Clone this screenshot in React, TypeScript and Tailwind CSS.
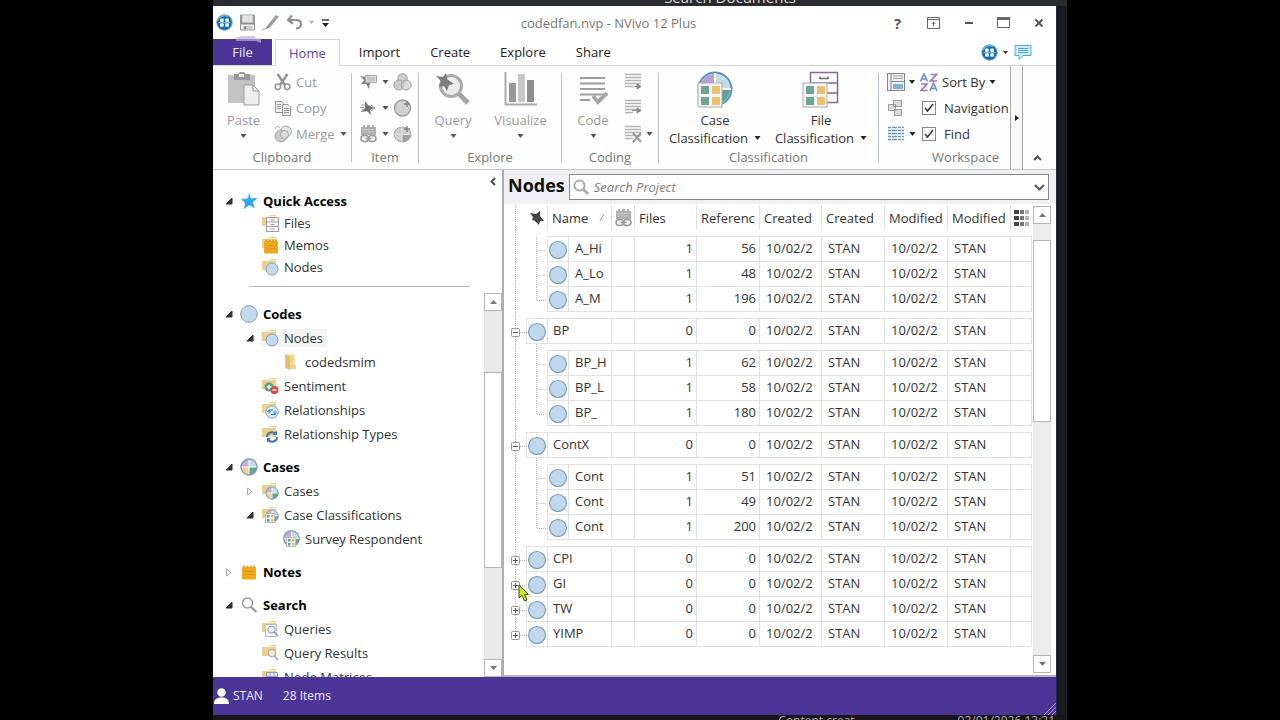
import type { ReactNode } from "react";

const Caret = ({ dark = true }: { dark?: boolean }) => (
  <svg width="7" height="4" viewBox="0 0 7 4" className="shrink-0">
    <path d="M.5 0h6L3.500 4z" fill={dark ? "#222" : "#555"} />
  </svg>
);

const Logo = () => (
  <svg width="17" height="17" viewBox="0 0 17 17" className="shrink-0">
    <circle cx="8.500" cy="8.500" r="7.700" fill="#1b6ba3" stroke="#6a9dc2" />
    <path d="M2 6a7 7 0 0 1 10-3.500" stroke="#6db4df" strokeWidth="1.500" fill="none" />
    <g fill="#e4f5ff">
      <rect x="4" y="4.500" width="3.800" height="3.500" rx="1" />
      <rect x="9.200" y="4.500" width="3.800" height="3.500" rx="1" />
      <rect x="4" y="9.300" width="3.800" height="3.500" rx="1" />
      <rect x="9.200" y="9.300" width="3.800" height="3.500" rx="1" />
    </g>
    <path d="M2.500 8.600h12" stroke="#9fd2ee" strokeWidth="0.800" />
  </svg>
);

const SaveIcon = () => (
  <svg width="17" height="17" viewBox="0 0 17 17">
    <path d="M1.500 1h14v15h-14z" fill="#ededed" stroke="#999" />
    <rect x="1" y="1" width="2.500" height="8" fill="#999" />
    <rect x="13.500" y="1" width="2.500" height="8" fill="#999" />
    <rect x="3.500" y="1.500" width="10" height="7" fill="#e2e2e2" />
    <rect x="1" y="8.500" width="15" height="2" fill="#8f8f8f" />
    <rect x="4" y="12" width="9" height="3.500" fill="#c9c9c9" />
    <rect x="5" y="12.500" width="2" height="3" fill="#888" />
  </svg>
);

const PenIcon = () => (
  <svg width="18" height="17" viewBox="0 0 18 17">
    <path d="M5 12l9-11 3 1.500L8 13.500z" fill="#9b9b9b" />
    <path d="M5 12l-1.500 3L8 13.500z" fill="#777" />
    <path d="M0 15.500l5-1" stroke="#aaa" />
  </svg>
);

const UndoIcon = () => (
  <svg width="17" height="17" viewBox="0 0 17 17" fill="none" stroke="#8d8d8d" strokeWidth="2.200">
    <path d="M6 1.500L2 6l5 3.500M2.500 6h7.500c3 0 5 1.500 5 4s-2 4.500-5 4.500" />
  </svg>
);

const PasteIcon = () => (
  <svg width="34" height="36" viewBox="0 0 34 36">
    <rect x="1" y="4" width="27" height="28" fill="#c3c3c3" />
    <path d="M7 3h4l2-2h4l2 2h4v6H7z" fill="#999" />
    <rect x="12" y="3" width="5" height="3" fill="#e8e8e8" />
    <path d="M17 14h9l6 6v14H17z" fill="#eee" stroke="#9e9e9e" />
    <path d="M26 14v6h6" fill="none" stroke="#9e9e9e" />
  </svg>
);

const CutIcon = () => (
  <svg width="17" height="18" viewBox="0 0 17 18" fill="none" stroke="#949494">
    <path d="M3.500 1l7.500 11M13.500 1L6 12" strokeWidth="2.400" />
    <circle cx="3.800" cy="13.800" r="2.700" strokeWidth="1.500" />
    <circle cx="13.200" cy="13.800" r="2.700" strokeWidth="1.500" />
  </svg>
);

const CopyIcon = () => (
  <svg width="18" height="17" viewBox="0 0 18 17" stroke="#949494">
    <path d="M1.500 1.500h6l2 2v9h-8z" fill="#eee" />
    <path d="M3 4.500h4M3 6.500h4M3 8.500h4" />
    <path d="M8.500 4.500h5.500l2.500 2.500v8.500h-8z" fill="#eee" />
    <path d="M10 8.500h5M10 10.500h5M10 12.500h5" />
  </svg>
);

const MergeIcon = () => (
  <svg width="19" height="18" viewBox="0 0 19 18" stroke="#a6a6a6">
    <circle cx="12" cy="6.500" r="5.500" fill="#e3e3e3" />
    <circle cx="7" cy="11" r="6" fill="#c9c9c9" />
    <circle cx="10.500" cy="9.500" r="4" fill="#ddd" />
    <path d="M1 4c1-3 4-3 5-1" fill="none" />
  </svg>
);

const ItemStarNote = () => (
  <svg width="18" height="16" viewBox="0 0 18 16">
    <path d="M0 2l6 1 2-3 1 4 5 3-4 2-1 6-3-5-5 0 3-4z" fill="#858585" />
    <rect x="5.500" y="1.500" width="11" height="7" fill="#ddd" stroke="#a5a5a5" />
    <path d="M7 4h8M7 6h8" stroke="#aaa" />
  </svg>
);

const ItemStar = () => (
  <svg width="18" height="16" viewBox="0 0 18 16">
    <path d="M5 1l3 4 6 3-4 2 1 5-4-4-6 1 4-4z" fill="#6f7078" />
    <path d="M1 5h4M0 7.500h4M1 10h3M11 5l4 3-4 3" stroke="#999" fill="none" />
  </svg>
);

const LinkBlocks = () => (
  <svg width="17" height="18" viewBox="0 0 17 18">
    <path d="M1 2h2V0h2v2h2V0h3v2h2V0h2v2h2v8H1z" fill="#adadad" />
    <path d="M2.500 4.500h12M2.500 7h12" stroke="#d4d4d4" strokeDasharray="2 1" />
    <rect x="1" y="10.500" width="7.500" height="6" rx="3" fill="#f0f0f0" stroke="#999" strokeWidth="1.500" />
    <rect x="8.500" y="10.500" width="7.500" height="6" rx="3" fill="#f0f0f0" stroke="#999" strokeWidth="1.500" />
    <path d="M5.500 13.500h6" stroke="#999" strokeWidth="1.500" />
  </svg>
);

const VennIcon = () => (
  <svg width="19" height="18" viewBox="0 0 19 18" stroke="#a2a2a2" fill="#cdcdcd">
    <circle cx="9.500" cy="5.500" r="4.800" />
    <circle cx="5.800" cy="12" r="5" />
    <circle cx="13.200" cy="12" r="5" fillOpacity="0.700" />
  </svg>
);

const CirclePlus = () => (
  <svg width="19" height="18" viewBox="0 0 19 18">
    <circle cx="9.500" cy="9" r="8" fill="#d0d0d0" stroke="#a0a0a0" strokeWidth="1.500" />
    <path d="M14 2v6M11 5h6" stroke="#858585" strokeWidth="1.500" />
  </svg>
);

const PieSmall = () => (
  <svg width="19" height="18" viewBox="0 0 19 18">
    <ellipse cx="9.500" cy="9.500" rx="8.500" ry="7.500" fill="#cfcfcf" stroke="#a5a5a5" />
    <path d="M9 9.500h8.500a8.500 7.500 0 0 1-8.500 7.500z" fill="#a0a0a0" />
    <path d="M9 2v15M1.500 9.500h16" stroke="#e6e6e6" />
    <path d="M14 1v6M11 4h6" stroke="#858585" strokeWidth="1.500" />
  </svg>
);

const QueryIcon = () => (
  <svg width="34" height="36" viewBox="0 0 34 36">
    <circle cx="15" cy="15" r="10.500" fill="#ececec" stroke="#aaa" strokeWidth="3" />
    <path d="M23 23l9 9" stroke="#a4a4a4" strokeWidth="5" />
    <path d="M0 5l7 1 3-4 1 6 7 5-5 1-2 6-3-5-5 1 2-6z" fill="#7c7c7c" />
  </svg>
);

const VisualizeIcon = () => (
  <svg width="34" height="36" viewBox="0 0 34 36">
    <path d="M1.500 1v32.500H33" fill="none" stroke="#aaa" strokeWidth="2" />
    <rect x="5" y="12" width="7" height="19" fill="#999" />
    <rect x="14" y="3" width="7" height="28" fill="#c8c8c8" />
    <rect x="23" y="9" width="7" height="22" fill="#8e8e8e" />
  </svg>
);

const CodeIcon = () => (
  <svg width="30" height="36" viewBox="0 0 30 36" stroke="#9e9e9e" fill="none">
    <path d="M2 7h25M2 12.500h25M2 18h25M2 23.500h25M2 29h10" strokeWidth="2" />
    <path d="M15 25l5 6 9-9" strokeWidth="4" stroke="#a6a6a6" />
  </svg>
);

const CodingLines = ({ kind }: { kind: "arrow" | "in" | "x" }) => (
  <svg width="18" height="18" viewBox="0 0 18 18" stroke="#b3b3b3" fill="none">
    <path d="M1 1.500h16M1 4.500h16M1 7.500h16M1 10.500h16M1 13.500h8" strokeWidth="1.700" />
    {kind === "arrow" && <path d="M10 13.500h3v-2.500l4 2.500-4 2.500v-2.500" fill="#888" stroke="#888" />}
    {kind === "in" && <path d="M8 11.500h5v-2.500l4 2.500-4 2.500v-2.500" fill="#888" stroke="#888" />}
    {kind === "x" && <path d="M9 8l8 9M17 8l-8 9" stroke="#999" strokeWidth="2" />}
  </svg>
);

const Squares = () => (
  <g>
    <rect x="1" y="12" width="24" height="24" fill="#f6f6f4" stroke="#aaa" />
    <rect x="4" y="15" width="8" height="8" fill="#6da594" />
    <rect x="15" y="15" width="8" height="8" fill="#ecc06c" />
    <rect x="4" y="26" width="8" height="8" fill="#6da594" />
    <rect x="15" y="26" width="8" height="8" fill="#ecc06c" />
  </g>
);

const CaseClassIcon = () => (
  <svg width="36" height="38" viewBox="0 0 36 38">
    <circle cx="18" cy="18" r="16.500" fill="#c5dbe9" stroke="#5b93bd" strokeWidth="2" />
    <path d="M17 17V3A15 15 0 0 0 3 17z" fill="#b9a0d2" />
    <path d="M19 19h14a15 15 0 0 1-14 14z" fill="#5e9f93" />
    <path d="M18 2v32M2 18h32" stroke="#fff" strokeWidth="2" />
    <Squares />
  </svg>
);

const FileClassIcon = () => (
  <svg width="38" height="38" viewBox="0 0 38 38">
    <path d="M8.500 1.500h27v30h-27z" fill="#fff" stroke="#86699a" strokeWidth="1.500" />
    <path d="M8 12h28M8 22h28" stroke="#86699a" strokeWidth="1.500" />
    <path d="M18 5.500v2h8v-2" fill="none" stroke="#666" strokeWidth="1.500" />
    <Squares />
  </svg>
);

const Folder = ({ children }: { children?: ReactNode }) => (
  <svg width="18" height="18" viewBox="0 0 18 18" className="block">
    <path d="M1 3h6l2-2h6v11H1z" fill="#ecd08d" />
    <path d="M8 2.500h6.500" stroke="#fff3d0" />
    {children}
  </svg>
);

const Pie = ({ x, y, r }: { x: number; y: number; r: number }) => (
  <g transform={`translate(${x} ${y}) scale(${r})`}>
    <circle r="1" fill="#c9dcea" />
    <path d="M0 0V-1A1 1 0 0 0-1 0z" fill="#c3aed8" />
    <path d="M0 0H-1A1 1 0 0 0 0 1z" fill="#ecd28c" />
    <path d="M0 0H1A1 1 0 0 1 0 1z" fill="#68a694" />
    <path d="M0-1V1M-1 0H1" stroke="#fff" strokeWidth="0.120" />
    <circle r="0.940" fill="none" stroke="#7c9fbe" strokeWidth="0.150" />
  </g>
);

const Pad = () => (
  <g>
    <rect x="3" y="5" width="14" height="12.500" rx="1" fill="#f2a81d" />
    <path d="M5 5.500v-2M8.500 5.500v-2M12 5.500v-2M15 5.500v-2" stroke="#e09312" strokeWidth="1.500" />
    <path d="M5.500 9.500h9M5.500 12.500h9" stroke="#d98f10" strokeDasharray="3 1" />
  </g>
);

const MiniGrid = () => (
  <g>
    <rect x="4.500" y="7.500" width="9" height="9" fill="#f5f5ef" stroke="#bbb" />
    <path d="M6 9h2.500v2.500H6zM6 13h2.500v2.500H6z" fill="#5d9dab" />
    <path d="M10 9h2.500v2.500H10zM10 13h2.500v2.500H10z" fill="#e6c069" />
  </g>
);

const treeIcons: Record<string, ReactNode> = {
  star: (
    <svg width="18" height="18" viewBox="0 0 18 18">
      <path d="M9 1l2 5.500 6.500-.5-5 4.500 2.500 6L9.500 13 4 17l1-6-4-4 6-.5z" fill="#2fa4e8" />
      <path d="M1.500 7l6-.5L9 2" stroke="#9bdcff" fill="none" />
    </svg>
  ),
  files: (
    <Folder>
      <rect x="5.500" y="3.500" width="12" height="14" fill="#fff" stroke="#a394b5" />
      <path d="M5.500 8h12M5.500 12.500h12" stroke="#a394b5" />
      <path d="M9.500 6h4M9.500 10.500h4M9.500 15h4" stroke="#999" />
    </Folder>
  ),
  memos: <Folder><Pad /></Folder>,
  nodes: <Folder><circle cx="11" cy="11" r="6" fill="#c2d9ed" stroke="#819fba" /></Folder>,
  codes: (
    <svg width="18" height="18" viewBox="0 0 18 18">
      <circle cx="9" cy="9" r="8.300" fill="#c2d9ef" stroke="#819fba" />
    </svg>
  ),
  folder: (
    <svg width="18" height="18" viewBox="0 0 18 18">
      <path d="M7 1h6v15H7z" fill="#f6e3b3" />
      <path d="M3 1l5 2v14l-5-2z" fill="#e6bf6b" />
      <path d="M8 3h3v8l3 1v4H8z" fill="#efd18b" />
    </svg>
  ),
  sentiment: (
    <Folder>
      <circle cx="8" cy="10" r="4.500" fill="#4f9c87" />
      <circle cx="13.500" cy="13" r="4" fill="#d8483f" />
      <path d="M8 7.500v5M5.500 10h5M11.500 13h4" stroke="#fff" strokeWidth="1.500" />
    </Folder>
  ),
  relationships: (
    <Folder>
      <circle cx="11" cy="11" r="6.200" fill="#d5e8f5" stroke="#7fa7c8" />
      <path d="M8 12.500V9h4M14 9.500V13.500h-4M6.500 11l1.500-2 1.500 2M12.500 11.500l1.500 2 1.500-2" stroke="#387cb0" fill="none" />
    </Folder>
  ),
  reltypes: (
    <Folder>
      <path d="M6 12c0-5 6-6 9-3M16 12c0 5-6 6-9 3" stroke="#3c77b5" strokeWidth="2" fill="none" />
      <path d="M16 5.500V10h-4.500zM6 17.500V13h4z" fill="#3c77b5" />
    </Folder>
  ),
  pie: <svg width="18" height="18" viewBox="0 0 18 18"><Pie x={9} y={9} r={8.500} /></svg>,
  cases: <Folder><Pie x={11} y={11} r={6.500} /></Folder>,
  caseclass: <Folder><Pie x={11} y={10} r={6.500} /><MiniGrid /></Folder>,
  survey: <svg width="18" height="18" viewBox="0 0 18 18"><Pie x={9.500} y={8.500} r={8.200} /><MiniGrid /></svg>,
  notes: <svg width="18" height="18" viewBox="1 1 18 18"><Pad /></svg>,
  search: (
    <svg width="18" height="18" viewBox="0 0 18 18" fill="none" stroke="#999">
      <circle cx="7.500" cy="7" r="5" strokeWidth="1.500" />
      <path d="M11 11l5.500 5" strokeWidth="2.200" />
    </svg>
  ),
  queries: (
    <Folder>
      <path d="M4.500 4.500h11v12h-11z" fill="#f2f4f8" stroke="#b4bcc9" />
      <circle cx="10.500" cy="9.500" r="3.500" fill="#e3eef7" stroke="#8b98a8" />
      <path d="M13 12l4 4" stroke="#8b98a8" strokeWidth="1.500" />
    </Folder>
  ),
  results: (
    <Folder>
      <circle cx="11" cy="9" r="3.800" fill="#f0ead4" stroke="#a3a398" />
      <path d="M13.500 12l3.500 4" stroke="#a3a398" strokeWidth="1.500" />
    </Folder>
  ),
  matrix: (
    <Folder>
      <path d="M5.500 4.500h11v12h-11zM9 4.500v12M13 4.500v12M5.500 8.500h11" fill="#e8edf3" stroke="#8fa0b3" />
    </Folder>
  ),
};

type Node = { label: string; icon: string; level: number; open?: boolean; selected?: boolean };

const TreeRow = ({ n, short }: { n: Node; short?: boolean }) => (
  <li className={n.level === 0 ? "pl-3" : n.level === 1 ? "pl-[33px]" : "pl-[54px]"}>
    <button className={`flex items-center whitespace-nowrap text-left ${short ? "h-[22px]" : "h-6"}`}>
      <span className="w-[15px] shrink-0">
        {n.open === true && <svg width="8" height="8" viewBox="0 0 8 8"><path d="M7 1v6H1z" fill="#333" stroke="#333" /></svg>}
        {n.open === false && <svg width="8" height="9" viewBox="0 0 8 9"><path d="M1.500 1v7l4.500-3.500z" fill="#fff" stroke="#aaa" /></svg>}
      </span>
      <span className={`flex items-center gap-[5px] pr-1 ${n.selected ? "bg-[#f4f4f5]" : ""}`}>
        {treeIcons[n.icon]}
        <span className={n.level === 0 ? "font-bold text-black" : "text-[#333]"}>{n.label}</span>
      </span>
    </button>
  </li>
);

const quick: Node[] = [
  { label: "Quick Access", icon: "star", level: 0, open: true },
  { label: "Files", icon: "files", level: 1 },
  { label: "Memos", icon: "memos", level: 1 },
  { label: "Nodes", icon: "nodes", level: 1 },
];

const sections: Node[][] = [
  [
    { label: "Codes", icon: "codes", level: 0, open: true },
    { label: "Nodes", icon: "nodes", level: 1, open: true, selected: true },
    { label: "codedsmim", icon: "folder", level: 2 },
    { label: "Sentiment", icon: "sentiment", level: 1 },
    { label: "Relationships", icon: "relationships", level: 1 },
    { label: "Relationship Types", icon: "reltypes", level: 1 },
  ],
  [
    { label: "Cases", icon: "pie", level: 0, open: true },
    { label: "Cases", icon: "cases", level: 1, open: false },
    { label: "Case Classifications", icon: "caseclass", level: 1, open: true },
    { label: "Survey Respondent", icon: "survey", level: 2 },
  ],
  [{ label: "Notes", icon: "notes", level: 0, open: false }],
  [
    { label: "Search", icon: "search", level: 0, open: true },
    { label: "Queries", icon: "queries", level: 1 },
    { label: "Query Results", icon: "results", level: 1 },
    { label: "Node Matrices", icon: "matrix", level: 1 },
  ],
];

const ScrollButton = ({ up }: { up?: boolean }) => (
  <button aria-label={up ? "Scroll up" : "Scroll down"} className="flex h-[18px] w-full shrink-0 items-center justify-center border border-[#b5b5b5] bg-white">
    <svg width="7" height="4" viewBox="0 0 7 4"><path d={up ? "M0 4h7L3.500 0z" : "M0 0h7L3.500 4z"} fill="#777" /></svg>
  </button>
);

const Group = ({ label, width, children }: { label: string; width: string; children: ReactNode }) => (
  <section className={`flex shrink-0 flex-col pt-[3px] ${width}`}>
    <div className="flex h-[78px]">{children}</div>
    <h2 className="text-center leading-5 text-[#777]">{label}</h2>
  </section>
);

const Separator = () => <div className="my-[7px] w-px shrink-0 bg-[#b9c0ca]" />;

const BigButton = ({ icon, label, width, dim = true }: { icon: ReactNode; label: string; width: string; dim?: boolean }) => (
  <button className={`flex shrink-0 flex-col items-center ${width} ${dim ? "text-[#999]" : "text-[#333]"}`}>
    <span className="flex h-10 items-center">{icon}</span>
    <span className="leading-[22px]">{label}</span>
    <span className="mt-[3px]"><Caret dark={!dim} /></span>
  </button>
);

const ClassButton = ({ icon, label }: { icon: ReactNode; label: string }) => (
  <button className="flex w-[106px] flex-col items-center text-[#333]">
    <span className="flex h-[42px] items-center">{icon}</span>
    <span className="leading-[18px]">{label}</span>
    <span className="flex items-center gap-1.5 leading-[18px]">Classification<Caret /></span>
  </button>
);

const IconPair = ({ a, b }: { a: ReactNode; b: ReactNode }) => (
  <div className="flex h-[26px] items-center justify-center gap-1 pl-px">
    <button aria-label="Item options" className="flex w-[29px] items-center justify-between">{a}<Caret dark={false} /></button>
    <button aria-label="Item action">{b}</button>
  </div>
);

type Row = { name: string; files: number; refs: number; child?: boolean; last?: boolean; open?: boolean; pointer?: boolean };

const groups: Row[][] = [
  [
    { name: "A_Hi", files: 1, refs: 56, child: true },
    { name: "A_Lo", files: 1, refs: 48, child: true },
    { name: "A_M", files: 1, refs: 196, child: true, last: true },
  ],
  [{ name: "BP", files: 0, refs: 0, open: true }],
  [
    { name: "BP_H", files: 1, refs: 62, child: true },
    { name: "BP_L", files: 1, refs: 58, child: true },
    { name: "BP_", files: 1, refs: 180, child: true, last: true },
  ],
  [{ name: "ContX", files: 0, refs: 0, open: true }],
  [
    { name: "Cont", files: 1, refs: 51, child: true },
    { name: "Cont", files: 1, refs: 49, child: true },
    { name: "Cont", files: 1, refs: 200, child: true, last: true },
  ],
  [
    { name: "CPI", files: 0, refs: 0 },
    { name: "GI", files: 0, refs: 0, pointer: true },
    { name: "TW", files: 0, refs: 0 },
    { name: "YIMP", files: 0, refs: 0, last: true },
  ],
];

const NodeDot = () => (
  <svg width="20" height="20" viewBox="0 0 20 20" className="mx-auto block">
    <circle cx="10" cy="11" r="8.500" fill="#c0d8ee" stroke="#7d9cb8" strokeWidth="1.200" />
  </svg>
);

const TreeLine = ({ row }: { row?: Row }) => {
  const parent = row && !row.child;
  return (
    <svg width="22" height="25" viewBox="0 0 22 25" className="block">
      <path d={parent && row.last ? "M11.500 0v14" : "M11.500 0v25"} stroke="#bbb" strokeDasharray="1 1" />
      {parent && (
        <g>
          <path d="M16 13.500h6" stroke="#bbb" strokeDasharray="1 1" />
          <rect x="7.500" y="9.500" width="8" height="8" rx="1" fill="#fff" stroke="#999" />
          <path d={row.open ? "M9 13.500h5" : "M9 13.500h5M11.500 11v5"} stroke="#555577" />
        </g>
      )}
    </svg>
  );
};

const box = "h-[25px] border-b border-r border-[#e2e2e2] p-0";
const cell = "h-[25px] border-b border-r border-[#e2e2e2] p-0 pb-0.5 whitespace-nowrap overflow-hidden";

const GapRow = ({ indent, above, first }: { indent: boolean; above: boolean; first?: boolean }) => (
  <tr>
    <td className="h-[7px] p-0">
      <svg width="22" height="7" viewBox="0 0 22 7" className="block"><path d="M11.500 0v7" stroke="#bbb" strokeDasharray="1 1" /></svg>
    </td>
    <td className={`h-[7px] p-0 ${indent ? "" : "border-b border-[#e2e2e2]"}`}>
      {indent && !above && !first && (
        <svg width="21" height="7" viewBox="0 0 21 7" className="block"><path d="M10.500 0v7" stroke="#bbb" strokeDasharray="1 1" /></svg>
      )}
    </td>
    <td colSpan={10} className="h-[7px] border-b border-[#e2e2e2] p-0" />
  </tr>
);

const DataRow = ({ r }: { r: Row }) => (
  <tr className="text-[#333]">
    <td className="relative h-[25px] p-0">
      <TreeLine row={r} />
      {r.pointer && (
        <svg width="12" height="18" viewBox="0 0 12 18" className="absolute left-[14px] top-3 z-10">
          <path d="M1 1v13l3-2.500 2.500 5.500 2.500-1-2.500-5.500h4z" fill="#c8ee1c" stroke="#3c4a10" />
        </svg>
      )}
    </td>
    {r.child ? (
      <>
        <td className="h-[25px] border-r border-[#e2e2e2] p-0">
          <svg width="20" height="25" viewBox="0 0 20 25" className="block">
            <path d={r.last ? "M10.500 0v13.500h10" : "M10.500 0v25M10.500 13.500h10"} fill="none" stroke="#bbb" strokeDasharray="1 1" />
          </svg>
        </td>
        <td className={box}><NodeDot /></td>
        <td className={`${cell} pl-1.5`}>{r.name}</td>
      </>
    ) : (
      <>
        <td className={`${box} border-l`}><NodeDot /></td>
        <td colSpan={2} className={`${cell} pl-[5px]`}>{r.name}</td>
      </>
    )}
    <td className={cell} />
    <td className={`${cell} pr-[3px] text-right`}>{r.files}</td>
    <td className={`${cell} pr-[3px] text-right`}>{r.refs}</td>
    <td className={`${cell} pl-1.5`}>10/02/2</td>
    <td className={`${cell} pl-1.5`}>STAN</td>
    <td className={`${cell} pl-1.5`}>10/02/2</td>
    <td className={`${cell} pl-1.5`}>STAN</td>
    <td className={cell} />
  </tr>
);

const head = "h-[25px] border-r border-[#e2e2e2] p-0 pl-1 text-left font-normal whitespace-nowrap overflow-hidden";

const NodesTable = () => (
  <table className="w-full table-fixed border-separate border-spacing-0">
    <colgroup>
      <col className="w-[22px]" />
      <col className="w-[22px]" />
      <col className="w-[21px]" />
      <col className="w-[43px]" />
      <col className="w-[23px]" />
      <col className="w-[62px]" />
      <col className="w-[63px]" />
      <col className="w-[62px]" />
      <col className="w-[63px]" />
      <col className="w-[63px]" />
      <col className="w-[63px]" />
      <col />
    </colgroup>
    <thead className="text-[#333]">
      <tr>
        <th className="h-[25px] p-0"><TreeLine /></th>
        <th className="h-[25px] border-r border-[#e2e2e2] p-0">
          <svg width="16" height="16" viewBox="0 0 16 16" className="mx-auto block"><path d="M1 3l6 1 4-3 0 5 4 5-4 0-1 4-4-4-3-1 1-3z" fill="#444" /></svg>
        </th>
        <th colSpan={2} className={head}>
          <span className="flex items-start justify-between pr-1.5">
            Name
            <svg width="6" height="9" viewBox="0 0 6 9" className="mt-1"><path d="M1 8l4-7" stroke="#999" /></svg>
          </span>
        </th>
        <th className="h-[25px] border-r border-[#e2e2e2] p-0"><span className="flex justify-center"><LinkBlocks /></span></th>
        <th className={head}>Files</th>
        <th className={head}>Referenc</th>
        <th className={head}>Created</th>
        <th className={head}>Created</th>
        <th className={head}>Modified</th>
        <th className={head}>Modified</th>
        <th className="h-[25px] p-0">
          <svg width="16" height="16" viewBox="0 0 16 16" className="mx-auto block">
            <path d="M0 0h5v4H0zM0 6h5v4H0zM0 12h5v4H0z" fill="#444" />
            <path d="M6 0h4v4H6zM6 6h4v4H6zM6 12h4v4H6z" fill="#777" />
            <path d="M11 0h4v4h-4zM11 6h4v4h-4zM11 12h4v4h-4z" fill="#b5b5b5" />
          </svg>
        </th>
      </tr>
    </thead>
    {groups.map((g, i) => (
      <tbody key={i}>
        <GapRow indent={!!g[0].child} above={i > 0 && !!groups[i - 1][0].child} first={i === 0} />
        {g.map((r, j) => <DataRow key={j} r={r} />)}
      </tbody>
    ))}
  </table>
);

const CheckRow = ({ label }: { label: string }) => (
  <label className="flex items-center gap-2">
    <span className="relative flex size-3.5 shrink-0">
      <input type="checkbox" defaultChecked className="size-3.5 appearance-none border border-[#888] bg-white" />
      <svg width="10" height="10" viewBox="0 0 10 10" className="pointer-events-none absolute left-0.5 top-0.5"><path d="M1 5l2.500 3L9 1" fill="none" stroke="#333" strokeWidth="1.500" /></svg>
    </span>
    {label}
  </label>
);

export default function App() {
  return (
    <div className="flex h-screen bg-black px-[213px] font-['Open_Sans','Noto_Sans',sans-serif] text-[13px] leading-[18px]">
      <div className="flex min-w-0 flex-1 flex-col overflow-hidden bg-[#1b1b1d]">
        <div className="flex h-1.5 shrink-0 items-end justify-center overflow-hidden bg-[#2a2b2e] pl-[180px] text-[15px] text-[#ddd]">
          <span>Search Documents</span>
        </div>

        <div className="flex min-h-0 flex-1">
          <div className="flex min-w-0 flex-1 flex-col border-r border-[#1c2a4a] bg-white">
            <header className="flex h-[33px] shrink-0 items-center">
              <div className="flex items-center gap-1.5 pl-[3px]">
                <Logo />
                <button aria-label="Save"><SaveIcon /></button>
                <button aria-label="Edit"><PenIcon /></button>
                <button aria-label="Undo" className="flex items-center gap-1.5"><UndoIcon />
                  <svg width="5" height="3" viewBox="0 0 5 3"><path d="M0 0h5L2.500 3z" fill="#aaa" /></svg>
                </button>
                <button aria-label="Customize toolbar" className="pl-0.5">
                  <svg width="7" height="8" viewBox="0 0 7 8"><path d="M0 1h7" stroke="#333" strokeWidth="1.500" /><path d="M0 4h7L3.500 8z" fill="#222" /></svg>
                </button>
              </div>
              <h1 className="flex-1 pl-2 text-center text-[#777]">codedfan.nvp - NVivo 12 Plus</h1>
              <div className="flex items-center text-[#555]">
                <button className="w-[35px] text-[15px] font-bold">?</button>
                <button aria-label="Ribbon display" className="flex w-9 justify-center">
                  <svg width="13" height="12" viewBox="0 0 13 12" fill="none" stroke="#666"><path d="M.5.5h12v11H.5zM.5 2.500h12M6.500 9.500V5M4.500 7l2-2 2 2" /></svg>
                </button>
                <button aria-label="Minimize" className="flex w-[35px] justify-center"><svg width="8" height="2"><path d="M0 1h8" stroke="#555" strokeWidth="2" /></svg></button>
                <button aria-label="Maximize" className="flex w-[35px] justify-center">
                  <svg width="13" height="11" viewBox="0 0 13 11" fill="none" stroke="#666"><path d="M.5.500h12v10H.5z" /><path d="M0 1.500h13" strokeWidth="3" /></svg>
                </button>
                <button aria-label="Close" className="flex w-[35px] justify-center"><svg width="8" height="8" viewBox="0 0 8 8"><path d="M.5.5l7 7M7.500.5l-7 7" stroke="#555" strokeWidth="2" /></svg></button>
              </div>
            </header>

            <nav className="flex h-[27px] shrink-0 border-b border-[#d5d5d8] text-[#222]">
              <button className="relative mr-[3px] w-[59px] bg-[#4b3596] text-[#e8e4f5]">
                File
                <svg width="28" height="9" viewBox="0 0 28 9" className="absolute -top-1 left-[22px]"><path d="M1 3l5-2h14l1 3 5-1v5l-5-2H1z" fill="#b9b0d8" fillOpacity="0.700" /></svg>
              </button>
              <button className="-mb-px mr-1 border border-b-0 border-[#d5d5d8] bg-white px-[13px] text-[#5b45a0]">Home</button>
              <button className="px-[15px]">Import</button>
              <button className="px-[15px]">Create</button>
              <button className="px-[15px]">Explore</button>
              <button className="px-[15px]">Share</button>
              <div className="ml-auto flex items-center gap-1.5 pr-6">
                <button aria-label="NVivo account" className="flex items-center gap-[5px]"><Logo /><svg width="5" height="3" viewBox="0 0 5 3"><path d="M0 0h5L2.500 3z" fill="#333" /></svg></button>
                <button aria-label="Feedback">
                  <svg width="18" height="17" viewBox="0 0 18 17"><path d="M1 1.500h16v10H9l-4 4v-4H1z" fill="#cbe9f8" stroke="#56abd6" /><path d="M4 4.500h10M4 6.500h10M4 8.500h10" stroke="#56abd6" /></svg>
                </button>
              </div>
            </nav>

            <div className="flex h-[104px] shrink-0 border-b border-[#c4c4c8] bg-[#fefefe]">
              <Group label="Clipboard" width="w-[138px]">
                <BigButton icon={<PasteIcon />} label="Paste" width="w-[61px]" />
                <div className="flex flex-col text-[#999]">
                  <button className="flex h-[26px] items-center gap-[5px]"><CutIcon />Cut</button>
                  <button className="flex h-[26px] items-center gap-1"><CopyIcon />Copy</button>
                  <button className="flex h-[26px] items-center gap-[3px]"><MergeIcon />Merge<span className="pl-0.5"><Caret dark={false} /></span></button>
                </div>
              </Group>
              <Separator />
              <Group label="Item" width="w-[66px]">
                <div className="flex flex-1 flex-col">
                  <IconPair a={<ItemStarNote />} b={<VennIcon />} />
                  <IconPair a={<ItemStar />} b={<CirclePlus />} />
                  <IconPair a={<LinkBlocks />} b={<PieSmall />} />
                </div>
              </Group>
              <Separator />
              <Group label="Explore" width="w-[142px]">
                <BigButton icon={<QueryIcon />} label="Query" width="w-[68px]" />
                <BigButton icon={<VisualizeIcon />} label="Visualize" width="w-[67px]" />
              </Group>
              <Separator />
              <Group label="Coding" width="w-[96px]">
                <BigButton icon={<CodeIcon />} label="Code" width="w-[62px]" />
                <div className="flex flex-col">
                  <button aria-label="Code selection" className="flex h-[26px] items-center"><CodingLines kind="arrow" /></button>
                  <button aria-label="Code in" className="flex h-[26px] items-center"><CodingLines kind="in" /></button>
                  <button aria-label="Uncode" className="flex h-[26px] items-center gap-1"><CodingLines kind="x" /><Caret dark={false} /></button>
                </div>
              </Group>
              <Separator />
              <Group label="Classification" width="w-[219px]">
                <div className="flex flex-1 pl-[3px]">
                  <ClassButton icon={<CaseClassIcon />} label="Case" />
                  <ClassButton icon={<FileClassIcon />} label="File" />
                </div>
              </Group>
              <Separator />
              <section className="flex w-[131px] shrink-0 flex-col pl-2 pt-[3px] text-[#333]">
                <div className="flex h-[26px] items-center gap-[5px]">
                  <button aria-label="Layout" className="flex w-7 items-center justify-between">
                    <svg width="18" height="18" viewBox="0 0 18 18"><rect x=".5" y=".5" width="17" height="17" fill="#eee" stroke="#888" /><path d="M4 0v18M4 8.500h14" stroke="#888" /><path d="M6 3h10M6 5.500h10" stroke="#aaa" /><rect x="6" y="11" width="10" height="5" fill="#84b2c6" /></svg>
                    <svg width="6" height="4" viewBox="0 0 6 4"><path d="M0 0h6L3 4z" fill="#222" /></svg>
                  </button>
                  <button className="flex items-center gap-1 whitespace-nowrap">
                    <svg width="18" height="19" viewBox="0 0 18 19" fill="none" strokeWidth="1.700">
                      <path d="M.5 8.500L4 1l3.500 7.500M2 6h4M10 18l3.500-8L17 18M11.500 15.500h4" stroke="#6d92c4" />
                      <path d="M10.500 1.500h6l-6 6.500h6.500M1 11h6L1 17.500h6.500" stroke="#9b78b5" />
                    </svg>
                    Sort By<Caret />
                  </button>
                </div>
                <div className="flex h-[26px] items-center">
                  <button aria-label="Windows" className="w-[35px] shrink-0">
                    <svg width="18" height="18" viewBox="0 0 18 18" fill="#ddd" stroke="#999"><path d="M6.500 1.500h8v6h-8zM1.500 5.500h7v6h-7zM7.500 10.500h7v6h-7z" /></svg>
                  </button>
                  <CheckRow label="Navigation" />
                </div>
                <div className="flex h-[26px] items-center">
                  <button aria-label="List view" className="flex w-[35px] shrink-0 items-center gap-1">
                    <svg width="18" height="16" viewBox="0 0 18 16"><path d="M1 1.500h16M1 4.500h16M1 7.500h16M1 10.500h16M1 13.500h16" stroke="#6e97b5" strokeWidth="1.500" strokeDasharray="3 1 5 1" /></svg>
                    <Caret />
                  </button>
                  <CheckRow label="Find" />
                </div>
                <h2 className="pl-[34px] text-center leading-5 text-[#777]">Workspace</h2>
              </section>
              <button aria-label="Scroll ribbon" className="flex w-[13px] shrink-0 items-center justify-center border-x border-[#a8a8a8] bg-[#f8f8f8]">
                <svg width="4" height="6" viewBox="0 0 4 6"><path d="M0 0v6l4-3z" fill="#222" /></svg>
              </button>
              <button aria-label="Collapse ribbon" className="flex flex-1 items-end justify-center pb-2 pr-1">
                <svg width="9" height="6" viewBox="0 0 9 6"><path d="M1 5l3.500-3.500L8 5" fill="none" stroke="#555" strokeWidth="2" /></svg>
              </button>
            </div>

            <main className="flex min-h-0 flex-1">
              <aside className="flex w-[291px] shrink-0 flex-col border-r-2 border-[#aeaeb2]">
                <div className="flex h-5 items-start justify-end pr-1.5 pt-[7px]">
                  <button aria-label="Collapse navigation">
                    <svg width="6" height="9" viewBox="0 0 6 9" className="block"><path d="M5 1L1.500 4.500 5 8" fill="none" stroke="#444" strokeWidth="1.800" /></svg>
                  </button>
                </div>
                <ul>{quick.map((n) => <TreeRow key={n.label} n={n} short />)}</ul>
                <hr className="ml-9 mr-8 mt-2 border-[#b8b8b8]" />
                <div className="mt-1.5 flex min-h-0 flex-1">
                  <div className="flex min-w-0 flex-1 flex-col gap-[9px] overflow-hidden pt-[9px]">
                    {sections.map((s, i) => (
                      <ul key={i} className="shrink-0">{s.map((n, j) => <TreeRow key={j} n={n} />)}</ul>
                    ))}
                  </div>
                  <div className="flex w-[18px] flex-col bg-[#e9e9eb]">
                    <ScrollButton up />
                    <div className="mb-auto mt-[61px] h-[51%] border border-[#b5b5b5] bg-white" />
                    <ScrollButton />
                  </div>
                </div>
              </aside>

              <section className="flex min-w-0 flex-1 flex-col border-b-2 border-[#b4b4bc] bg-white">
                <div className="flex h-[34px] shrink-0 items-center gap-1 bg-[#f0f0f4] pl-1 pr-[7px]">
                  <h2 className="pb-1 text-[18px] font-bold text-[#111]">Nodes</h2>
                  <label className="flex h-[26px] min-w-0 flex-1 items-center gap-[5px] border border-[#888] bg-white px-[3px]">
                    <svg width="16" height="16" viewBox="0 0 16 16" fill="none" stroke="#aaa"><circle cx="6.500" cy="6.500" r="5" strokeWidth="2" /><path d="M10 10l5 5" strokeWidth="2.500" /></svg>
                    <input type="text" aria-label="Search Project" placeholder="Search Project" className="min-w-0 flex-1 bg-transparent italic outline-none placeholder:text-[#808080]" />
                    <svg width="11" height="7" viewBox="0 0 11 7"><path d="M1 1l4.500 4.500L10 1" fill="none" stroke="#555" strokeWidth="2" /></svg>
                  </label>
                </div>
                <div className="flex min-h-0 flex-1 pr-[5px] pt-px">
                  <div className="min-w-0 flex-1 overflow-hidden pr-px"><NodesTable /></div>
                  <div className="mb-0.5 mt-px flex w-[18px] flex-col bg-[#ececee]">
                    <ScrollButton up />
                    <div className="mb-auto mt-4 h-[39%] border border-[#b5b5b5] bg-white" />
                    <ScrollButton />
                  </div>
                </div>
              </section>
            </main>

            <footer className="flex h-[38px] shrink-0 items-center bg-[#4b3596] text-[12px] text-[#ece8f8]">
              <svg width="17" height="16" viewBox="0 0 17 16"><circle cx="8.500" cy="4.500" r="4.200" fill="#fff" /><path d="M1 16c0-5 3-6.500 7.500-6.500S16 11 16 16z" fill="#fff" /></svg>
              <span className="pl-[3px]">STAN</span>
              <span className="pl-5">28 Items</span>
              <svg width="13" height="13" viewBox="0 0 13 13" className="ml-auto self-end"><path d="M1 13L13 1M5 13l8-8M9 13l4-4" stroke="#a79bd0" /></svg>
            </footer>
          </div>
          <div className="w-2.5 shrink-0 bg-[#191b1e]" />
        </div>

        <div className="flex h-[5px] shrink-0 justify-end gap-[103px] overflow-hidden bg-[#17161a] pr-3 text-[12px] leading-[12px] text-[#aaa]">
          <span>Content creat</span>
          <span>02/01/2026 13:21</span>
        </div>
      </div>
    </div>
  );
}
